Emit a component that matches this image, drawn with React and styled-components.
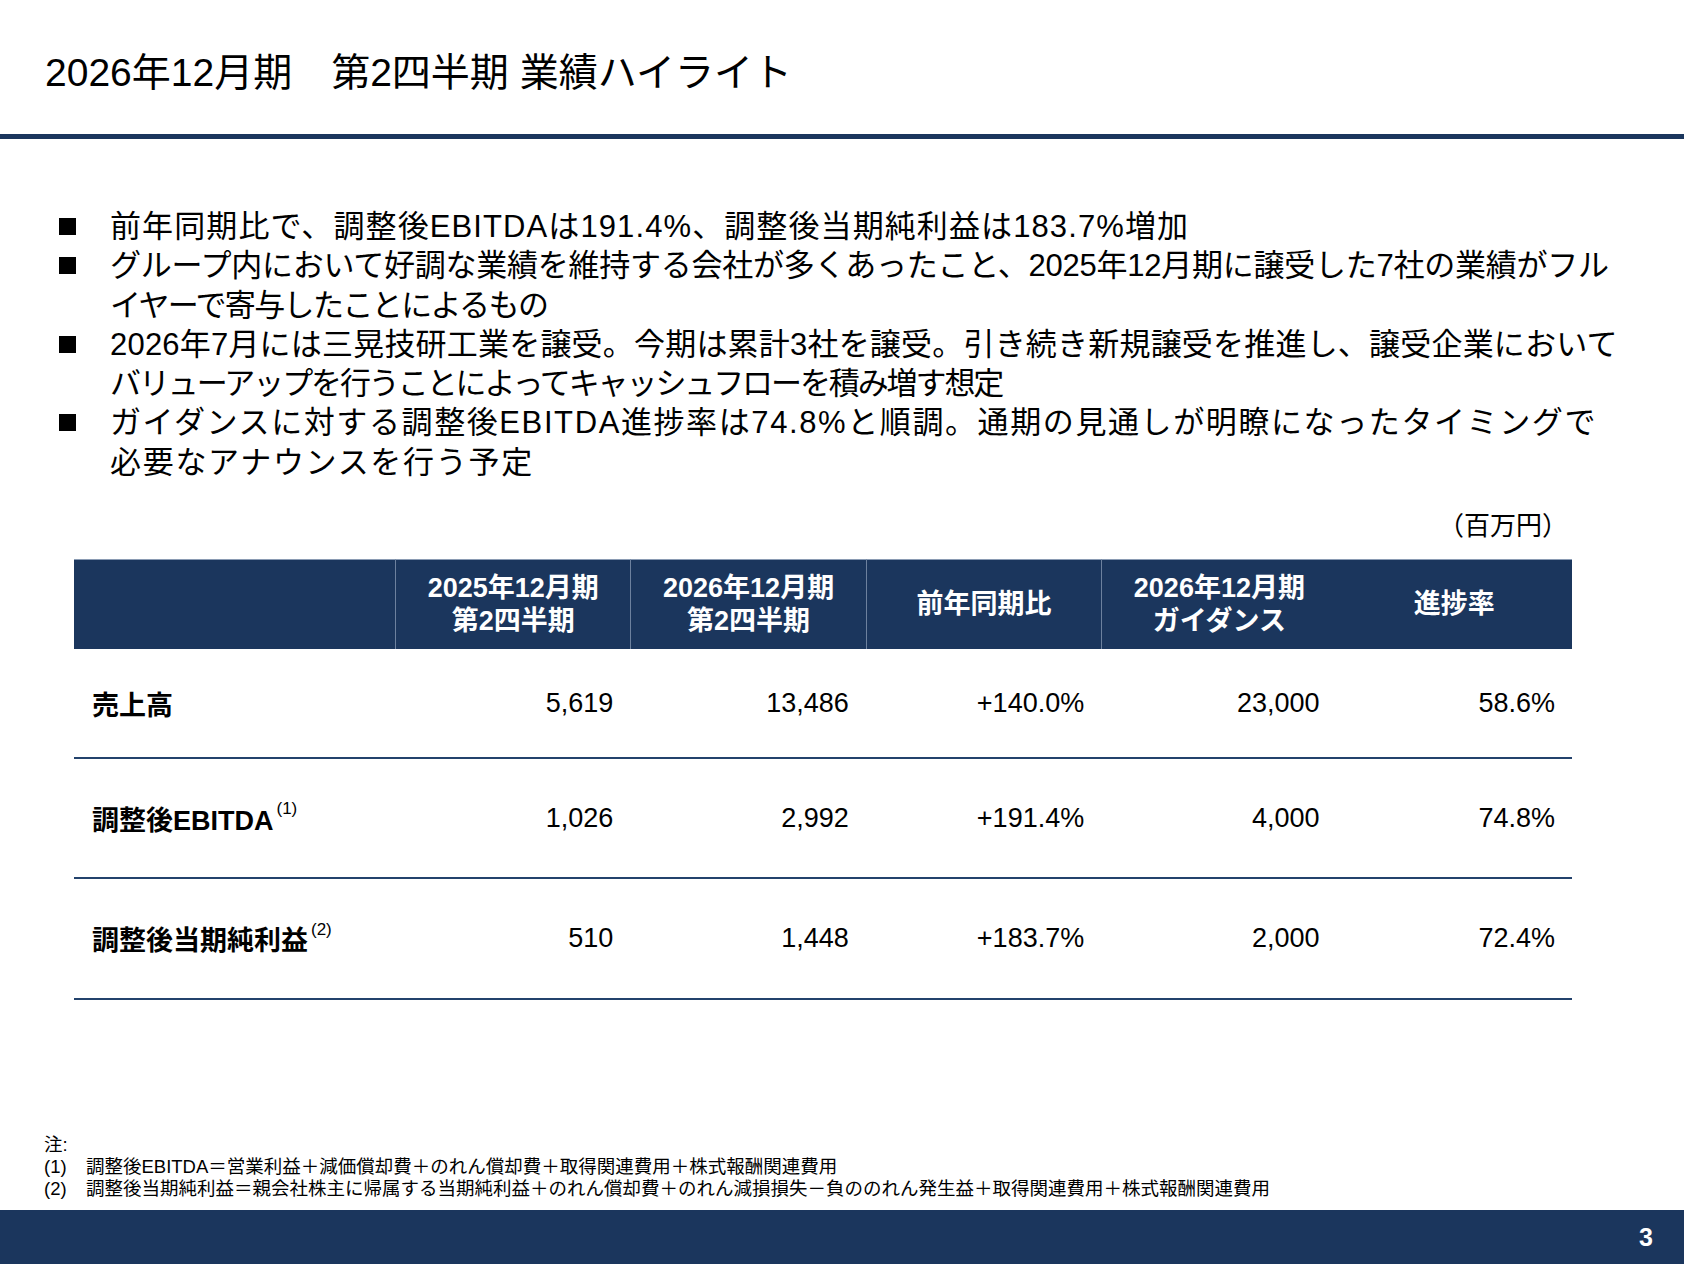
import React from 'react';
import styled, { createGlobalStyle } from 'styled-components';

const NAVY = '#1b365d';

const GlobalStyle = createGlobalStyle`
  html, body {
    margin: 0;
    padding: 0;
    background: #fff;
  }
  body {
    font-family: "Liberation Sans", "Noto Sans CJK JP", sans-serif;
    color: #000;
  }
`;

const Slide = styled.div`
  width: 1684px;
  height: 1264px;
  display: flex;
  flex-direction: column;
  overflow: hidden;
  background: #fff;
`;

const Header = styled.header`
  height: 139px;
  display: flex;
  align-items: center;
  padding-left: 45px;
  padding-top: 4px;
  box-sizing: border-box;
  border-bottom: 5px solid ${NAVY};
`;

const Title = styled.h1`
  margin: 0;
  font-size: 39px;
  font-weight: 400;
  letter-spacing: 0;
  white-space: pre;
`;

const Bullets = styled.ul`
  list-style: none;
  margin: 68px 0 0 0;
  padding: 0 0 0 59px;
`;

const Bullet = styled.li`
  display: grid;
  grid-template-columns: 51px auto;
  font-size: 31px;
  line-height: 39.3px;
  white-space: nowrap;
  &::before {
    content: '';
    width: 17px;
    height: 17px;
    background: #000;
    margin-top: 11px;
  }
`;

// each slide line keeps its own tracking so the line ends land where the slide's do
const Line = styled.span`
  display: block;
  letter-spacing: ${(p) => p.$track || 0}px;
`;

const Unit = styled.div`
  width: 1498px;
  margin: 29px 0 0 74px;
  text-align: right;
  font-size: 26px;
  line-height: 30px;
  padding-right: 4px;
  box-sizing: border-box;
`;

const Table = styled.div`
  width: 1498px;
  margin: 18px 0 0 74px;
  display: grid;
  grid-template-columns: 321px repeat(5, 1fr);
`;

const HeadCell = styled.div`
  height: 90px;
  background: ${NAVY};
  border-top: 1px solid #8a9bb3;
  border-left: ${(p) => (p.$divider ? '1px solid #6d819e' : 'none')};
  color: #fff;
  font-size: 27px;
  font-weight: 700;
  line-height: 33px;
  display: flex;
  align-items: center;
  justify-content: center;
  text-align: center;
  box-sizing: border-box;
`;

const Cell = styled.div`
  height: ${(p) => p.$h}px;
  border-bottom: 2px solid #23426c;
  display: flex;
  align-items: center;
  justify-content: ${(p) => (p.$label ? 'flex-start' : 'flex-end')};
  padding: ${(p) => (p.$label ? '0 0 0 18px' : '0 17px 0 0')};
  font-size: 27px;
  font-weight: ${(p) => (p.$label ? 700 : 400)};
  box-sizing: border-box;
  white-space: nowrap;
`;

const Sup = styled.span`
  font-size: 17px;
  font-weight: 400;
  position: relative;
  top: -9px;
  margin-left: 3px;
`;

const Notes = styled.div`
  margin-top: auto;
  padding: 0 0 10px 44px;
  font-size: 18.5px;
  line-height: 22px;
`;

const NoteRow = styled.div`
  display: grid;
  grid-template-columns: 42px auto;
  white-space: nowrap;
`;

const Footer = styled.footer`
  height: 54px;
  background: ${NAVY};
  display: flex;
  align-items: center;
  justify-content: flex-end;
  padding-right: 31px;
  color: #fff;
  font-size: 25px;
  font-weight: 700;
`;

const bullets = [
  [{ text: '前年同期比で、調整後EBITDAは191.4%、調整後当期純利益は183.7%増加', track: 1.1 }],
  [
    { text: 'グループ内において好調な業績を維持する会社が多くあったこと、2025年12月期に譲受した7社の業績がフル', track: -0.25 },
    { text: 'イヤーで寄与したことによるもの', track: -1.6 },
  ],
  [
    { text: '2026年7月には三晃技研工業を譲受。今期は累計3社を譲受。引き続き新規譲受を推進し、譲受企業において', track: 0.2 },
    { text: 'バリューアップを行うことによってキャッシュフローを積み増す想定', track: -2.1 },
  ],
  [
    { text: 'ガイダンスに対する調整後EBITDA進捗率は74.8%と順調。通期の見通しが明瞭になったタイミングで', track: 1.6 },
    { text: '必要なアナウンスを行う予定', track: 1.7 },
  ],
];

const heads = [
  { text: ['2025年12月期', '第2四半期'], divider: true },
  { text: ['2026年12月期', '第2四半期'], divider: true },
  { text: ['前年同期比'], divider: true },
  { text: ['2026年12月期', 'ガイダンス'], divider: true },
  { text: ['進捗率'], divider: false },
];

const rows = [
  { label: '売上高', values: ['5,619', '13,486', '+140.0%', '23,000', '58.6%'], h: 110 },
  { label: '調整後EBITDA', sup: '(1)', values: ['1,026', '2,992', '+191.4%', '4,000', '74.8%'], h: 120 },
  { label: '調整後当期純利益', sup: '(2)', values: ['510', '1,448', '+183.7%', '2,000', '72.4%'], h: 121 },
];

export default function App() {
  return (
    <Slide>
      <GlobalStyle />
      <Header>
        <Title>{'2026年12月期　第2四半期 業績ハイライト'}</Title>
      </Header>

      <Bullets>
        {bullets.map((lines, i) => (
          <Bullet key={i}>
            <span>
              {lines.map((l, j) => (
                <Line key={j} $track={l.track}>{l.text}</Line>
              ))}
            </span>
          </Bullet>
        ))}
      </Bullets>

      <Unit>（百万円）</Unit>

      <Table>
        <HeadCell $divider={false} />
        {heads.map((h, i) => (
          <HeadCell key={i} $divider={h.divider}>
            <span>
              {h.text.map((t, j) => (
                <React.Fragment key={j}>
                  {j > 0 && <br />}
                  {t}
                </React.Fragment>
              ))}
            </span>
          </HeadCell>
        ))}
        {rows.map((r) => (
          <React.Fragment key={r.label}>
            <Cell $label $h={r.h}>
              {r.label}
              {r.sup && <Sup>{r.sup}</Sup>}
            </Cell>
            {r.values.map((v, i) => (
              <Cell key={i} $h={r.h}>{v}</Cell>
            ))}
          </React.Fragment>
        ))}
      </Table>

      <Notes>
        <div>注:</div>
        <NoteRow>
          <span>(1)</span>
          <span>調整後EBITDA＝営業利益＋減価償却費＋のれん償却費＋取得関連費用＋株式報酬関連費用</span>
        </NoteRow>
        <NoteRow>
          <span>(2)</span>
          <span>調整後当期純利益＝親会社株主に帰属する当期純利益＋のれん償却費＋のれん減損損失－負ののれん発生益＋取得関連費用＋株式報酬関連費用</span>
        </NoteRow>
      </Notes>

      <Footer>3</Footer>
    </Slide>
  );
}
